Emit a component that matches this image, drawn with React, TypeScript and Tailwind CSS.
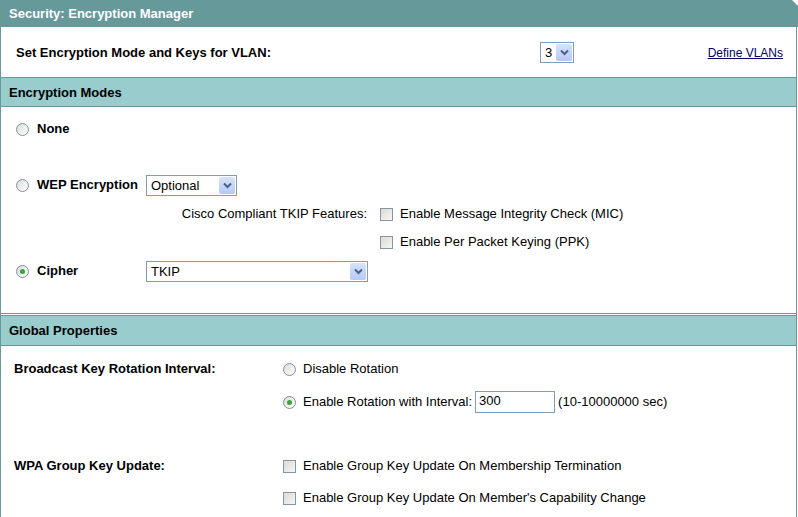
import React from 'react';

function Radio({ checked }: { checked?: boolean }) {
  return (
    <span className="flex h-[13px] w-[13px] shrink-0 items-center justify-center rounded-full border border-[#7d91a8] bg-gradient-to-br from-[#dcdcd6] to-white">
      {checked && <span className="h-[5px] w-[5px] rounded-full bg-[#3aa33a]" />}
    </span>
  );
}

function Check() {
  return (
    <span className="block h-[13px] w-[13px] shrink-0 border border-[#8596aa] bg-gradient-to-br from-[#dcdcd6] to-[#f6f6f2]" />
  );
}

function Select({ value, width }: { value: string; width: string }) {
  return (
    <span className={`flex h-[21px] items-center justify-between border border-[#7f9db9] bg-white pl-[4px] pr-px ${width}`}>
      <span className="text-[13px] leading-none">{value}</span>
      <span className="flex h-[17px] w-[16px] items-center justify-center rounded-[2px] bg-gradient-to-b from-[#d6e3fc] to-[#b4c9f5]">
        <svg width="9" height="7" viewBox="0 0 9 7">
          <path d="M1 1.5 L4.5 5 L8 1.5" fill="none" stroke="#4d6185" strokeWidth="2" />
        </svg>
      </span>
    </span>
  );
}

function Header({ title, h }: { title: string; h: string }) {
  return (
    <div className={`flex items-center border-y border-[#669999] bg-[#99cccc] px-[8px] pt-px font-bold ${h}`}>
      {title}
    </div>
  );
}

export default function App() {
  return (
    <div className="w-[798px] bg-white text-[13px] text-black [font-family:'Liberation_Sans',Arial,sans-serif]">
      {/* Title bar */}
      <div className="flex h-[27px] items-center bg-[#669999] px-[9px] pt-px font-bold text-white [clip-path:polygon(0_0,calc(100%-6px)_0,100%_6px,100%_100%,0_100%)]">
        Security: Encryption Manager
      </div>

      <div className="w-[797px] border-x border-[#669999]">
        {/* VLAN row */}
        <div className="flex h-[50px] items-center pl-[15px] pr-[13px] pt-px">
          <span className="w-[524px] font-bold">Set Encryption Mode and Keys for VLAN:</span>
          <Select value="3" width="w-[34px]" />
          <a className="ml-auto text-[12px] text-[#000066] underline">Define VLANs</a>
        </div>

        <Header title="Encryption Modes" h="h-[30px]" />

        {/* Encryption modes */}
        <div className="flex h-[206px] flex-col pl-[15px] pt-[12px]">
          <div className="flex h-[20px] items-center gap-[8px]">
            <Radio />
            <span className="font-bold">None</span>
          </div>
          <div className="mt-[36px] flex h-[20px] items-center">
            <Radio />
            <span className="ml-[8px] w-[109px] font-bold">WEP Encryption</span>
            <Select value="Optional" width="w-[91px]" />
          </div>
          <div className="mt-[9px] flex h-[20px] items-center">
            <span className="w-[364px] pr-[13px] text-right">Cisco Compliant TKIP Features:</span>
            <Check />
            <span className="ml-[7px]">Enable Message Integrity Check (MIC)</span>
          </div>
          <div className="mt-[8px] flex h-[20px] items-center pl-[364px]">
            <Check />
            <span className="ml-[7px]">Enable Per Packet Keying (PPK)</span>
          </div>
          <div className="mt-[9px] flex h-[20px] items-center">
            <Radio checked />
            <span className="ml-[8px] w-[109px] font-bold">Cipher</span>
            <Select value="TKIP" width="w-[222px]" />
          </div>
        </div>

        <div className="h-px bg-[#669999]" />
        <div className="h-px" />
        <Header title="Global Properties" h="h-[31px]" />

        {/* Global properties */}
        <div className="flex flex-col pb-[10px] pl-[13px] pt-[13px]">
          <div className="flex h-[20px] items-center">
            <span className="w-[269px] font-bold">Broadcast Key Rotation Interval:</span>
            <Radio />
            <span className="ml-[7px]">Disable Rotation</span>
          </div>
          <div className="mt-[12px] flex h-[22px] items-center pl-[269px]">
            <Radio checked />
            <span className="ml-[7px]">Enable Rotation with Interval:</span>
            <span className="ml-[3px] flex h-[22px] w-[80px] items-start border border-[#7f9db9] px-[3px] pt-[2px] text-[13px] leading-none">
              300
            </span>
            <span className="ml-[3px]">(10-10000000 sec)</span>
          </div>
          <div className="mt-[43px] flex h-[20px] items-center">
            <span className="w-[269px] font-bold">WPA Group Key Update:</span>
            <Check />
            <span className="ml-[7px]">Enable Group Key Update On Membership Termination</span>
          </div>
          <div className="mt-[12px] flex h-[20px] items-center pl-[269px]">
            <Check />
            <span className="ml-[7px]">Enable Group Key Update On Member's Capability Change</span>
          </div>
        </div>
      </div>
    </div>
  );
}
